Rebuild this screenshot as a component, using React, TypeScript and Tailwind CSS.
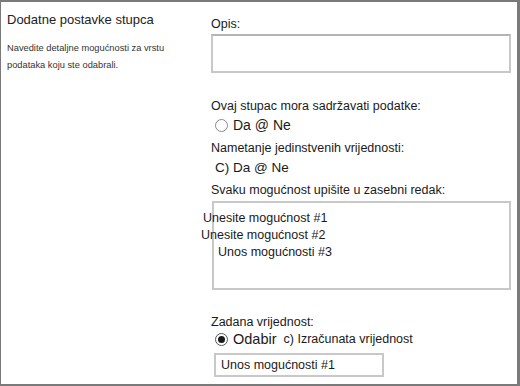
import React from 'react';

const font = { fontFamily: '"Liberation Sans", Arial, sans-serif' };

export default function App() {
  return (
    <div className="w-[520px] h-[386px] bg-white" style={font}>
      <div className="w-[520px] h-[386px] border-t-2 border-l border-r-[3px] border-b-2 border-[#7a7a7a] flex text-[#1a1a1a]">
        {/* left column */}
        <div className="w-[209px] pl-[6px] pt-[10px]">
          <div className="text-[13px] leading-[16px] text-[#222]">Dodatne postavke stupca</div>
          <div className="mt-[12px] text-[9.3px] leading-[17px] text-[#333] w-[180px]">
            Navedite detaljne mogućnosti za vrstu podataka koju ste odabrali.
          </div>
        </div>

        {/* right column */}
        <div className="flex-1 pt-[14px] pr-[6px] text-[12.5px] leading-[16px]">
          <div className="pl-[1px]">Opis:</div>
          <div className="mt-[2px] ml-[1px] w-[300px] h-[39px] border-2 border-[#c8c8c8] border-t-[#b4b4b4]" />

          <div className="mt-[25px] pl-[1px]">Ovaj stupac mora sadržavati podatke:</div>
          <div className="mt-[3px] ml-[5px] flex items-center gap-[5px] text-[14px] leading-[16px]">
            <span className="w-[13px] h-[13px] rounded-full border border-[#8a8a8a] bg-white" />
            <span>Da @ Ne</span>
          </div>

          <div className="mt-[7px] pl-[1px]">Nametanje jedinstvenih vrijednosti:</div>
          <div className="mt-[4px] ml-[5px] text-[13.5px] leading-[16px]">C) Da @ Ne</div>

          <div className="mt-[6px] pl-[1px]">Svaku mogućnost upišite u zasebni redak:</div>
          <div className="mt-[3px] ml-[2px] w-[299px] h-[89px] border-2 border-[#c8c8c8] pt-[7px] text-[12.5px] leading-[17px]">
            <div className="-ml-[11px] whitespace-nowrap">Unesite mogućnost #1</div>
            <div className="-ml-[13px] whitespace-nowrap">Unesite mogućnost #2</div>
            <div className="ml-[4px] whitespace-nowrap">Unos mogućnosti #3</div>
          </div>

          <div className="mt-[24px] pl-[1px]">Zadana vrijednost:</div>
          <div className="mt-[0px] ml-[5px] flex items-center">
            <span className="w-[13px] h-[13px] rounded-full border border-[#555] bg-white flex items-center justify-center">
              <span className="w-[7px] h-[7px] rounded-full bg-[#1a1a1a]" />
            </span>
            <span className="ml-[5px] text-[14.5px] leading-[18px]">Odabir</span>
            <span className="ml-[7px] text-[12.5px] leading-[18px]">c) Izračunata vrijednost</span>
          </div>
          <div className="mt-[5px] ml-[4px] w-[170px] h-[24px] border-2 border-[#c8c8c8] pl-[5px] text-[12.5px] leading-[20px]">
            Unos mogućnosti #1
          </div>
        </div>
      </div>
    </div>
  );
}
